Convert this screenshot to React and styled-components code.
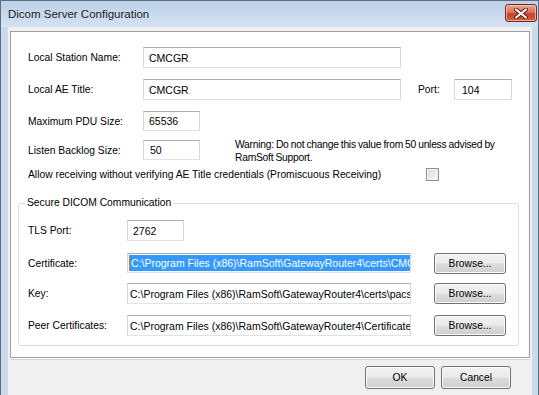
import styled, { createGlobalStyle } from "styled-components";

const GlobalStyle = createGlobalStyle`
  html, body {
    margin: 0;
    padding: 0;
    overflow: hidden;
    background: #ffffff;
  }
  * {
    box-sizing: border-box;
  }
`

const Window = styled.div`
  width: 539px;
  height: 395px;
  display: flex;
  flex-direction: column;
  background: #c9daee;
  border-top: 1px solid #5f6f82;
  border-left: 1px solid #5f6f82;
  border-right: 1px solid #5f6f82;
  padding: 0 6px 0 7px;
  font-family: "Liberation Sans", Arial, sans-serif;
  font-size: 10.3px;
  color: #000;
  overflow: hidden;
`
const TitleBar = styled.div`
  height: 26px;
  margin: 0 -6px 0 -7px;
  padding: 0 1px 0 7px;
  display: flex;
  align-items: flex-start;
  justify-content: space-between;
  background: linear-gradient(#bdd0e8, #d4e2f2);
`
const Title = styled.span`
  font-size: 11.5px;
  line-height: 26px;
  color: #1e1e1e;
`
const CloseButton = styled.div`
  margin-top: 3px;
  width: 32px;
  height: 18px;
  border: 1px solid #7a2a1c;
  border-radius: 3px;
  background: linear-gradient(#e9a796 0%, #d9745c 45%, #c4442a 55%, #d2633f 100%);
  box-shadow: inset 0 0 0 1px rgba(255, 220, 210, 0.6);
  display: flex;
  align-items: center;
  justify-content: center;
`
const Client = styled.div`
  flex: 1;
  background: #f0f0f0;
  padding: 4px 2px 0 2px;
  display: flex;
  flex-direction: column;
`
const Panel = styled.div`
  height: 327px;
  background: #ffffff;
  border: 1px solid #a0a0a0;
  box-shadow: 0 1px 0 #ffffff, 0 2px 0 #d8d8d8;
  padding: 15px 0 0 17px;
  display: flex;
  flex-direction: column;
`
const Row = styled.div`
  display: flex;
  align-items: center;
  height: ${p => p.$h}px;
  margin-top: ${p => p.$mt || 0}px;
`
const Label = styled.div`
  width: ${p => p.$w}px;
  flex-shrink: 0;
  white-space: nowrap;
  margin-left: ${p => p.$ml || 0}px;
`
const TextBox = styled.div`
  width: ${p => p.$w}px;
  height: 100%;
  flex-shrink: 0;
  margin-left: ${p => p.$ml || 0}px;
  border: 1px solid;
  border-color: #acaeb4 #d6d9de #dde2e8 #d6d9de;
  background: #ffffff;
  padding-left: ${p => p.$pl ?? 5}px;
  font-size: 10.5px;
  display: flex;
  align-items: center;
  white-space: nowrap;
  overflow: hidden;
`
const Selected = styled.span`
  background: #3399ff;
  color: #ffffff;
  border-left: 1px solid #d0782e;
  padding: 2px 0 2px 1px;
`
const Warning = styled.div`
  margin-left: 35px;
  line-height: 13px;
  margin-top: 2px;
  letter-spacing: -0.25px;
  word-spacing: -0.5px;
`
const CheckBox = styled.div`
  width: 13px;
  height: 13px;
  flex-shrink: 0;
  border: 1px solid #8e8f8f;
  background: linear-gradient(135deg, #dcdcdc, #f6f6f6);
  box-shadow: inset 0 0 0 1px #f4f4f4;
`
const Group = styled.div`
  position: relative;
  margin: 21px 10px 0 -10px;
  height: 143px;
  border: 1px solid #d5dfe5;
  border-radius: 3px;
  padding: 16px 0 0 9px;
  display: flex;
  flex-direction: column;
`
const Legend = styled.span`
  position: absolute;
  top: -8px;
  left: 6px;
  padding: 0 2px;
  background: #ffffff;
  line-height: 14px;
`
const Button = styled.div`
  width: ${p => p.$w}px;
  height: ${p => p.$h}px;
  flex-shrink: 0;
  margin-left: ${p => p.$ml || 0}px;
  border: 1px solid #707070;
  border-radius: 3px;
  background: linear-gradient(#f2f2f2 0%, #ebebeb 48%, #dddddd 52%, #cfcfcf 100%);
  box-shadow: inset 0 0 0 1px #fbfbfb;
  display: flex;
  align-items: center;
  justify-content: center;
`
const Footer = styled.div`
  display: flex;
  justify-content: flex-end;
  gap: 6px;
  padding: 8px 19px 0 0;
`

const CloseIcon = () => (
  <svg width="14" height="11" viewBox="0 0 14 11">
    <path d="M2 1.5 L12 9.5 M12 1.5 L2 9.5" stroke="#5a1a10" strokeWidth="4" strokeLinecap="round" />
    <path d="M2 1.5 L12 9.5 M12 1.5 L2 9.5" stroke="#ffffff" strokeWidth="2.2" strokeLinecap="round" />
  </svg>
)

const paths = [
  { label: "Certificate:", value: "C:\\Program Files (x86)\\RamSoft\\GatewayRouter4\\certs\\CMCGR.crt", selected: true, h: 20, mt: 12 },
  { label: "Key:", value: "C:\\Program Files (x86)\\RamSoft\\GatewayRouter4\\certs\\pacs.key", h: 21, mt: 10 },
  { label: "Peer Certificates:", value: "C:\\Program Files (x86)\\RamSoft\\GatewayRouter4\\Certificates", h: 21, mt: 11 },
]

export default function App() {
  return (
    <>
      <GlobalStyle />
      <Window>
        <TitleBar>
          <Title>Dicom Server Configuration</Title>
          <CloseButton><CloseIcon /></CloseButton>
        </TitleBar>
        <Client>
          <Panel>
            <Row $h={21}>
              <Label $w={115}>Local Station Name:</Label>
              <TextBox $w={258}>CMCGR</TextBox>
            </Row>
            <Row $h={21} $mt={11}>
              <Label $w={115}>Local AE Title:</Label>
              <TextBox $w={258}>CMCGR</TextBox>
              <Label $w={36} $ml={17}>Port:</Label>
              <TextBox $w={58} $pl={7}>104</TextBox>
            </Row>
            <Row $h={20} $mt={11}>
              <Label $w={115}>Maximum PDU Size:</Label>
              <TextBox $w={57}>65536</TextBox>
            </Row>
            <Row $h={20} $mt={9}>
              <Label $w={115}>Listen Backlog Size:</Label>
              <TextBox $w={57} $pl={6}>50</TextBox>
              <Warning>
                Warning: Do not change this value from 50 unless advised by<br />
                RamSoft Support.
              </Warning>
            </Row>
            <Row $h={15} $mt={7}>
              <Label $w={398}>Allow receiving without verifying AE Title credentials (Promiscuous Receiving)</Label>
              <CheckBox />
            </Row>
            <Group>
              <Legend>Secure DICOM Communication</Legend>
              <Row $h={21}>
                <Label $w={99}>TLS Port:</Label>
                <TextBox $w={57}>2762</TextBox>
              </Row>
              {paths.map(p => (
                <Row key={p.label} $h={p.h} $mt={p.mt}>
                  <Label $w={99}>{p.label}</Label>
                  <TextBox $w={284} $pl={p.selected ? 1 : 2}>
                    {p.selected ? <Selected>{p.value}</Selected> : p.value}
                  </TextBox>
                  <Button $w={72} $h={21} $ml={23}>Browse...</Button>
                </Row>
              ))}
            </Group>
          </Panel>
          <Footer>
            <Button $w={70} $h={23}>OK</Button>
            <Button $w={70} $h={23}>Cancel</Button>
          </Footer>
        </Client>
      </Window>
    </>
  )
}
